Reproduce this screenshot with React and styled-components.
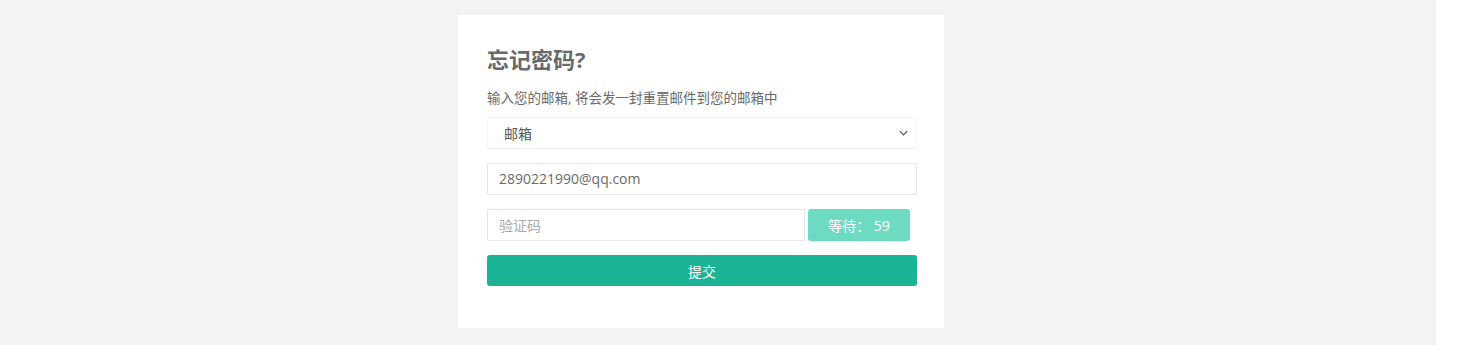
import styled, { createGlobalStyle } from "styled-components";

const GlobalStyle = createGlobalStyle`
  html, body {
    margin: 0;
    padding: 0;
    background: #ffffff;
  }
  body {
    font-family: "Open Sans", "Noto Sans CJK SC", sans-serif;
    color: #676a6c;
  }
`;

const App = () => {
  return (
    <Page>
      <GlobalStyle />
      <Main>
        <Card>
          <Title>忘记密码?</Title>
          <Hint>输入您的邮箱, 将会发一封重置邮件到您的邮箱中</Hint>
          <Select>
            <span>邮箱</span>
            <Chevron viewBox="0 0 10 6">
              <path d="M1 1l4 4 4-4" fill="none" stroke="#555" strokeWidth="1.3" />
            </Chevron>
          </Select>
          <Field>2890221990@qq.com</Field>
          <CodeRow>
            <Field $placeholder>验证码</Field>
            <WaitButton>等待： 59</WaitButton>
          </CodeRow>
          <SubmitButton>提交</SubmitButton>
        </Card>
      </Main>
      <SideStrip />
    </Page>
  );
};

export default App;

const Page = styled.div`
  display: grid;
  grid-template-columns: 1436px 30px;
  height: 345px;
`;

const Main = styled.div`
  background: #f3f3f4;
  padding: 15px 0 0 458px;
`;

const SideStrip = styled.div`
  background: #ffffff;
`;

const Card = styled.div`
  width: 430px;
  background: #ffffff;
  padding: 31px 27px 42px 29px;
  display: flex;
  flex-direction: column;
`;

const Title = styled.h2`
  margin: 0;
  font-size: 22px;
  line-height: 26px;
  font-weight: 700;
  color: #676a6c;
`;

const Hint = styled.p`
  margin: 17px 0 0;
  font-size: 13.5px;
  line-height: 18px;
  color: #676a6c;
`;

const Select = styled.div`
  margin-top: 10px;
  height: 32px;
  box-sizing: border-box;
  border: 1px solid #f3f3f3;
  padding: 0 8px 0 16px;
  display: flex;
  align-items: center;
  justify-content: space-between;
  font-size: 14px;
  color: #555;
`;

const Chevron = styled.svg`
  width: 9px;
  height: 6px;
`;

const Field = styled.div`
  margin-top: ${(p) => (p.$placeholder ? "0" : "14px")};
  flex: ${(p) => (p.$placeholder ? "0 0 318px" : "none")};
  height: 32px;
  box-sizing: border-box;
  border: 1px solid #e5e6e7;
  border-radius: 1px;
  padding: 0 11px 1px;
  display: flex;
  align-items: center;
  font-size: 14px;
  color: ${(p) => (p.$placeholder ? "#a9a9a9" : "#676a6c")};
`;

const CodeRow = styled.div`
  margin-top: 14px;
  display: flex;
  gap: 3px;
`;

const WaitButton = styled.div`
  width: 102px;
  height: 32px;
  border-radius: 3px;
  background: #6ddac2;
  color: #ffffff;
  font-size: 14px;
  display: flex;
  align-items: center;
  justify-content: center;
`;

const SubmitButton = styled.div`
  margin-top: 14px;
  height: 31px;
  border-radius: 3px;
  background: #1ab394;
  color: #ffffff;
  font-size: 14px;
  display: flex;
  align-items: center;
  justify-content: center;
`;
